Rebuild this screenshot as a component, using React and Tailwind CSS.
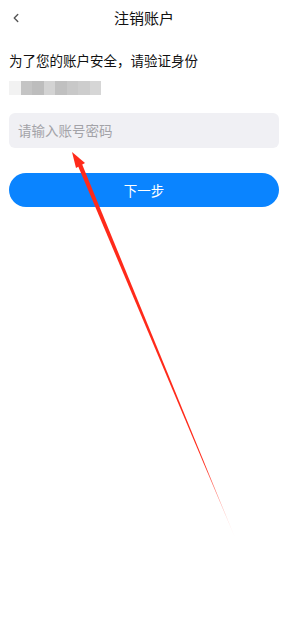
import { ChevronLeft } from 'lucide-react'

const font = { fontFamily: '"Noto Sans CJK SC", "Noto Sans", sans-serif' }

// 模糊处理的账号
const mosaic = ['#f2f2f2', '#c4c4c4', '#bdbdbd', '#d3d3d3', '#c0c0c0', '#c8c8c8', '#cdcdcd', '#d6d6d6']

function Arrow() {
  return (
    <svg className="pointer-events-none absolute left-0 top-0" width="288" height="636" viewBox="0 0 288 636">
      <defs>
        <linearGradient id="fade" x1="72" y1="153" x2="236" y2="540" gradientUnits="userSpaceOnUse">
          <stop offset="0" stopColor="#ff2a1a" />
          <stop offset="0.8" stopColor="#ff2a1a" />
          <stop offset="1" stopColor="#ff2a1a" stopOpacity="0" />
        </linearGradient>
      </defs>
      <polygon points="78,166 82,164 236,540" fill="url(#fade)" />
      <polygon points="72,152 85,163 76,168" fill="#ff2a1a" />
    </svg>
  )
}

export default function App() {
  return (
    <div className="relative h-[636px] w-[288px] overflow-hidden bg-white" style={font}>
      <div className="relative flex h-[36px] items-center justify-center">
        <ChevronLeft className="absolute left-[9px] top-[11px] h-[14px] w-[14px] text-[#555]" strokeWidth={2.4} />
        <span className="text-[15px] text-[#111]">注销账户</span>
      </div>
      <div className="px-[9px]">
        <p className="mt-[14px] text-[13.5px] leading-[20px] text-[#111]">为了您的账户安全，请验证身份</p>
        <div className="mt-[11px] flex h-[14px] w-[92px] blur-[0.6px]">
          {mosaic.map((c, i) => (
            <div key={i} className="h-full flex-1" style={{ background: c }} />
          ))}
        </div>
        <div className="mt-[18px] flex h-[35px] items-center rounded-[6px] bg-[#f0f0f4] px-[9px] text-[13.5px] text-[#a3a3a8]">
          请输入账号密码
        </div>
        <button className="mt-[25px] flex h-[34px] w-full items-center justify-center rounded-full bg-[#0a84ff] text-[13.5px] text-white">
          下一步
        </button>
      </div>
      <Arrow />
    </div>
  )
}
